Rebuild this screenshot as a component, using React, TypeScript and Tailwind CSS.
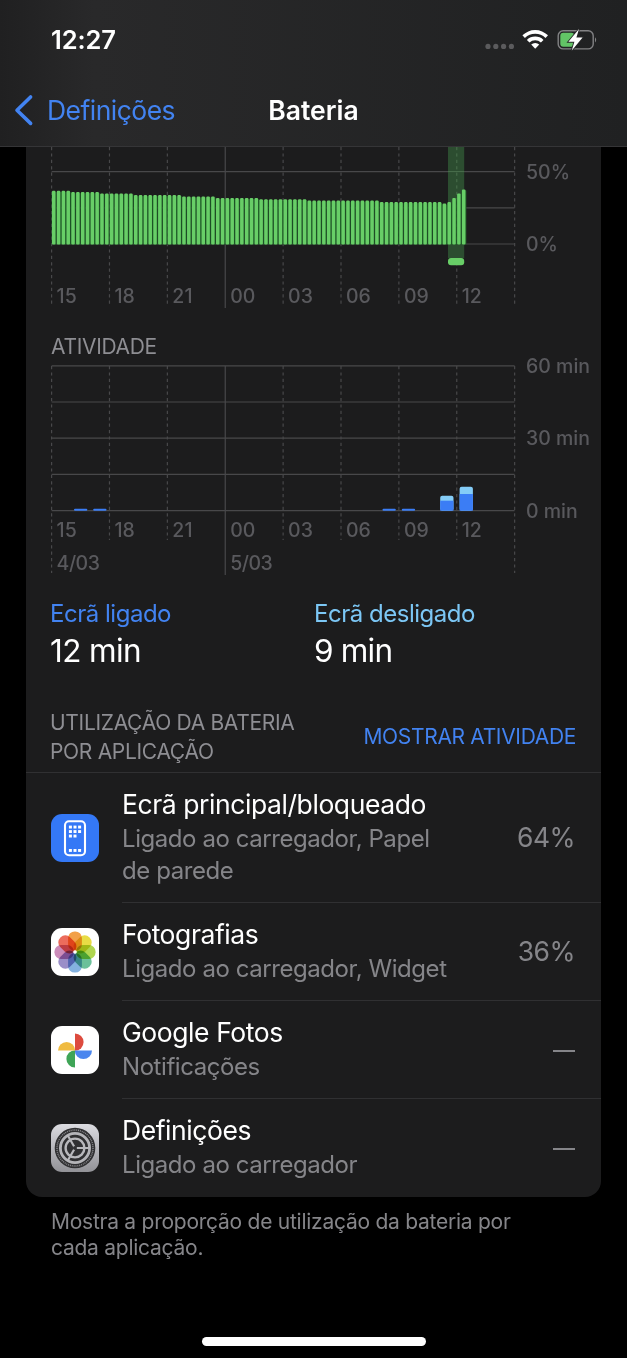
const ticks = ["15", "18", "21", "00", "03", "06", "09", "12"];

const LEFT = 51.6;
const STEP = 57.88;
const tickX = (k: number) => LEFT + k * STEP;

// [number of bars, y of the bar top]
const levels = [
	[4, 190.8],
	[6, 192],
	[7, 193.4],
	[10, 195],
	[7, 196.4],
	[9, 197.9],
	[10, 199.3],
	[15, 200.6],
	[13, 202],
	[1, 203.6],
	[1, 202],
	[1, 198],
	[1, 193.4],
	[1, 189.4],
];

const batteryBars = levels.flatMap(([count, top]) => Array.from({ length: count }, () => top));

const activity = [
	{ x: 74, on: 2, off: 0 },
	{ x: 93.2, on: 2, off: 0 },
	{ x: 382.5, on: 2, off: 0 },
	{ x: 401.8, on: 2, off: 0 },
	{ x: 440.2, on: 10, off: 5 },
	{ x: 459.6, on: 16.7, off: 7.3 },
];

const apps = [
	{ name: "Ecrã principal/bloqueado", detail: "Ligado ao carregador, Papel de parede", value: "64%", Icon: HomeScreenIcon },
	{ name: "Fotografias", detail: "Ligado ao carregador, Widget", value: "36%", Icon: PhotosIcon },
	{ name: "Google Fotos", detail: "Notificações", value: "", Icon: GooglePhotosIcon },
	{ name: "Definições", detail: "Ligado ao carregador", value: "", Icon: SettingsIcon },
];

function HomeScreenIcon() {
	const dots = [[0, 0], [1, 0], [2, 0], [0, 1], [1, 1], [2, 1], [0, 2], [1, 2], [0, 5.2], [1, 5.2], [2, 5.2]];
	return (
		<svg viewBox="0 0 48 48" className="size-12">
			<rect width="48" height="48" rx="11" fill="#3478f6" />
			<rect x="14" y="7.2" width="20" height="34" rx="4" fill="none" stroke="#fff" strokeWidth="2.1" />
			{dots.map(([x, y], k) => (
				<rect key={k} x={17.9 + x * 4.6} y={11.6 + y * 4.5} width="3" height="2.9" fill="#fff" />
			))}
		</svg>
	);
}

function PhotosIcon() {
	const petals = ["#f2a048", "#e8dc45", "#b0d650", "#6cc09a", "#84b2e0", "#9a8ec8", "#cc8cba", "#ec6c5c"];
	return (
		<svg viewBox="0 0 48 48" className="size-12">
			<rect width="48" height="48" rx="11" fill="#fff" />
			<g className="isolate">
				{petals.map((color, k) => (
					<rect
						key={k}
						x="17.1"
						y="3.4"
						width="13.8"
						height="19.6"
						rx="6.6"
						fill={color}
						transform={`rotate(${k * 45} 24 24)`}
						className="mix-blend-multiply"
					/>
				))}
			</g>
			<circle cx="24" cy="24" r="1.8" fill="#fff" />
		</svg>
	);
}

function GooglePhotosIcon() {
	return (
		<svg viewBox="0 0 48 48" className="size-12">
			<rect width="48" height="48" rx="11" fill="#fff" />
			<path d="M24 7.5a8.6 8.6 0 0 1 0 17.2z" fill="#dd4b3e" />
			<path d="M41 24.5a8.6 8.6 0 0 1-17.2 0z" fill="#4a86ee" />
			<path d="M24 41.5a8.6 8.6 0 0 1 0-17.2z" fill="#3fa557" />
			<path d="M7 24.5a8.6 8.6 0 0 1 17.2 0z" fill="#f0bb41" />
		</svg>
	);
}

function SettingsIcon() {
	return (
		<svg viewBox="0 0 48 48" className="size-12">
			<defs>
				<linearGradient id="metal" x1="0" y1="0" x2="0" y2="1">
					<stop offset="0" stopColor="#dcdce1" />
					<stop offset="1" stopColor="#929297" />
				</linearGradient>
			</defs>
			<rect width="48" height="48" rx="11" fill="url(#metal)" />
			<circle cx="24" cy="24" r="20.3" fill="#303032" />
			<circle cx="24" cy="24" r="18" fill="none" stroke="#8a8a8e" strokeWidth="1.4" strokeDasharray="1 0.9" />
			<circle cx="24" cy="24" r="14.6" fill="none" stroke="#b4b4b8" strokeWidth="2.8" />
			<circle cx="24" cy="24" r="9.4" fill="none" stroke="#b8b8bc" strokeWidth="2.4" />
			<path d="M24 24H39M24 24 16.5 11M24 24 16.5 37" stroke="#b8b8bc" strokeWidth="2.2" />
			<circle cx="24" cy="24" r="2" fill="#303032" />
		</svg>
	);
}

function StatusIcons() {
	return (
		<svg viewBox="484 26 114 26" className="h-[26px] w-[114px]">
			{[488, 495.8, 503.6, 511.4].map((x) => (
				<circle key={x} cx={x} cy="46.4" r="2.6" fill="#5b5b5d" />
			))}
			{/* wifi */}
			<path d="M522.4 35.3a18.4 18.4 0 0 1 25.6 0l-2.5 2.7a14.8 14.8 0 0 0-20.6 0z" fill="#fff" />
			<path d="M526.9 39.9a12 12 0 0 1 16.6 0l-2.6 2.7a8.2 8.2 0 0 0-11.4 0z" fill="#fff" />
			<path d="M531.2 44.6a5.8 5.8 0 0 1 8 0l-4 4.2z" fill="#fff" />
			{/* battery */}
			<rect x="558.2" y="30.7" width="35" height="18.2" rx="5" fill="none" stroke="#828284" strokeWidth="1.4" />
			<path d="M595 37.2q2.4 2.6 0 5.2z" fill="#828284" />
			<rect x="560.3" y="32.8" width="14" height="14" rx="3" fill="#62c466" />
			<path d="m579 29-10.6 12.8h6l-2.6 8.7 10.8-13h-6.2z" fill="#fff" stroke="#28292a" strokeWidth="1.8" paintOrder="stroke" />
		</svg>
	);
}

function BatteryChart() {
	return (
		<svg viewBox="26 147 575 173" className="block h-[173px] w-full" fontSize="19.5" fontWeight="500" fill="#59595d">
			<g stroke="#48484a" strokeWidth="1.2">
				<path d="M51.6 171.6H514.6M51.6 207.9H514.6M51.6 244H514.6" />
				{[...ticks, "end"].map((t, k) => (
					<line key={t} x1={tickX(k)} x2={tickX(k)} y1="147" y2={k == 3 ? 308 : 306} strokeDasharray={k == 3 ? undefined : "3.2 3.2"} />
				))}
			</g>

			{/* charging period */}
			<rect x="448" y="147" width="16.2" height="111" fill="#2c4d30" />
			<line x1="456.8" x2="456.8" y1="147" y2="244" stroke="#4a704e" strokeDasharray="3.2 3.2" />
			<path d="M448 171.6h16.2" stroke="#4a704e" />
			<rect x="448" y="258" width="16.2" height="7.2" rx="3" fill="#68ce67" />

			{batteryBars.map((top, k) => (
				<g key={k}>
					<rect x={LEFT + k * 4.823} y={top + 1.2} width="4.83" height={243.2 - top} fill="#1f5a28" />
					<rect x={LEFT + 0.4 + k * 4.823} y={top} width="3.5" height={244.4 - top} rx="1" fill="#68ce67" />
				</g>
			))}

			{ticks.map((t, k) => (
				<text key={t} x={tickX(k) + 5} y="302.6">{t}</text>
			))}
			<text x="526" y="178.8">50%</text>
			<text x="526" y="251">0%</text>
		</svg>
	);
}

function ActivityChart() {
	return (
		<svg viewBox="26 350 575 230" className="block h-[230px] w-full" fontSize="19.5" fontWeight="500" fill="#59595d">
			<g stroke="#48484a" strokeWidth="1.2">
				<path d="M51.6 365.8H514.6M51.6 402H514.6M51.6 438.2H514.6M51.6 474.4H514.6M51.6 510.7H514.6" />
				{[...ticks, "end"].map((t, k) => (
					<line
						key={t}
						x1={tickX(k)}
						x2={tickX(k)}
						y1="366"
						y2={k == 3 ? 575 : k == 0 || k == 8 ? 573 : 540}
						strokeDasharray={k == 3 ? undefined : "3.2 3.2"}
					/>
				))}
			</g>

			{activity.map((i, k) => (
				<g key={k}>
					<rect x={i.x} y={510.7 - i.on - i.off} width="13.3" height={i.on + i.off} rx={i.off ? 2 : 1} fill={i.off ? "#84ccf7" : "#3b7df5"} />
					{i.off > 0 && <rect x={i.x} y={510.7 - i.on} width="13.3" height={i.on} fill="#3b7df5" />}
				</g>
			))}

			{ticks.map((t, k) => (
				<text key={t} x={tickX(k) + 5} y="537.3">{t}</text>
			))}
			<g letterSpacing="-0.5">
				<text x="56.6" y="569.8">4/03</text>
				<text x="230.2" y="569.8">5/03</text>
			</g>
			<text x="526" y="373">60 min</text>
			<text x="526" y="445.4">30 min</text>
			<text x="526" y="517.8">0 min</text>
		</svg>
	);
}

export default function App() {
	return (
		<div className="flex h-[1358px] w-[627px] flex-col overflow-hidden bg-black font-['Inter',sans-serif] text-white">
			{/* status bar + nav */}
			<header className="h-[147px] shrink-0 border-b border-[#353537] bg-linear-to-r from-[#202021] via-[#29292a] via-15% to-[#202122]">
				<div className="flex items-start justify-between pt-[26px] pr-[29px] pl-[51px]">
					<p className="text-[25.5px] leading-7 font-semibold tracking-[-0.005em]">12:27</p>
					<StatusIcons />
				</div>
				<div className="grid grid-cols-3 items-center pt-[38px] pl-[14px]">
					<div className="flex items-center text-[#4283f1]">
						<svg viewBox="0 0 20 32" className="h-8 w-5" fill="none" stroke="currentColor" strokeWidth="3.6" strokeLinecap="round" strokeLinejoin="round">
							<path d="M16.6 3 3 16.3 16.6 29.4" />
						</svg>
						<p className="pl-[13px] text-[26.5px] leading-9 tracking-[-0.02em]">Definições</p>
					</div>
					<h1 className="-ml-[14px] text-center text-[26.5px] leading-9 font-semibold">Bateria</h1>
				</div>
			</header>

			<main className="mx-[26px] h-[1050px] w-[575px] shrink-0 overflow-hidden rounded-b-2xl bg-[#1c1c1d]">
				<BatteryChart />
				<h2 className="h-[30px] pt-[13px] pl-[25px] text-[21px] leading-7 tracking-[-0.015em] text-[#8e8e93]">ATIVIDADE</h2>
				<ActivityChart />

				<div className="grid grid-cols-[264px_1fr] pt-[18px] pl-[24px]">
					<div>
						<p className="text-[24px] leading-8 tracking-[-0.02em] text-[#4283f1]">Ecrã ligado</p>
						<p className="pt-[3px] text-[31.5px] leading-9 tracking-[-0.02em]">12 min</p>
					</div>
					<div>
						<p className="text-[24px] leading-8 tracking-[-0.02em] text-[#7cc7f5]">Ecrã desligado</p>
						<p className="pt-[3px] text-[31.5px] leading-9 tracking-[-0.025em]">9 min</p>
					</div>
				</div>

				{/* section header */}
				<div className="mt-9 flex h-[68px] items-center justify-between border-b border-[#303032] pr-[25px] pb-[3px] pl-[24px]">
					<h2 className="w-[270px] text-[21px] leading-[29px] tracking-[-0.015em] text-[#8e8e93]">UTILIZAÇÃO DA BATERIA POR APLICAÇÃO</h2>
					<p className="text-[21px] leading-7 tracking-[-0.016em] text-[#4283f1]">MOSTRAR ATIVIDADE</p>
				</div>

				{apps.map((i, k) => (
					<div key={k} className="flex items-center pl-[25px]">
						<i.Icon />
						<div className={`ml-[23px] flex flex-1 items-center pt-[13px] pr-[26px] pb-[15px] ${k < 3 ? "border-b border-[#303032]" : ""}`}>
							<div className="w-[340px]">
								<p className="text-[26.5px] leading-9 tracking-[-0.016em]">{i.name}</p>
								<p className="pt-px text-[24px] leading-8 tracking-[-0.018em] text-[#858589]">{i.detail}</p>
							</div>
							{i.value ? (
								<p className="ml-auto text-[26.5px] leading-9 tracking-[-0.02em] text-[#858589]">{i.value}</p>
							) : (
								<div className="mt-1 ml-auto h-0.5 w-[22px] bg-[#858589]" />
							)}
						</div>
					</div>
				))}
			</main>

			<p className="w-[540px] pt-3 pl-[51px] text-[21px] leading-[26px] tracking-[-0.012em] text-[#858589]">
				Mostra a proporção de utilização da bateria por cada aplicação.
			</p>

			<div className="mx-auto mt-auto mb-3 h-[9px] w-[224px] rounded-full bg-white" />
		</div>
	);
}
